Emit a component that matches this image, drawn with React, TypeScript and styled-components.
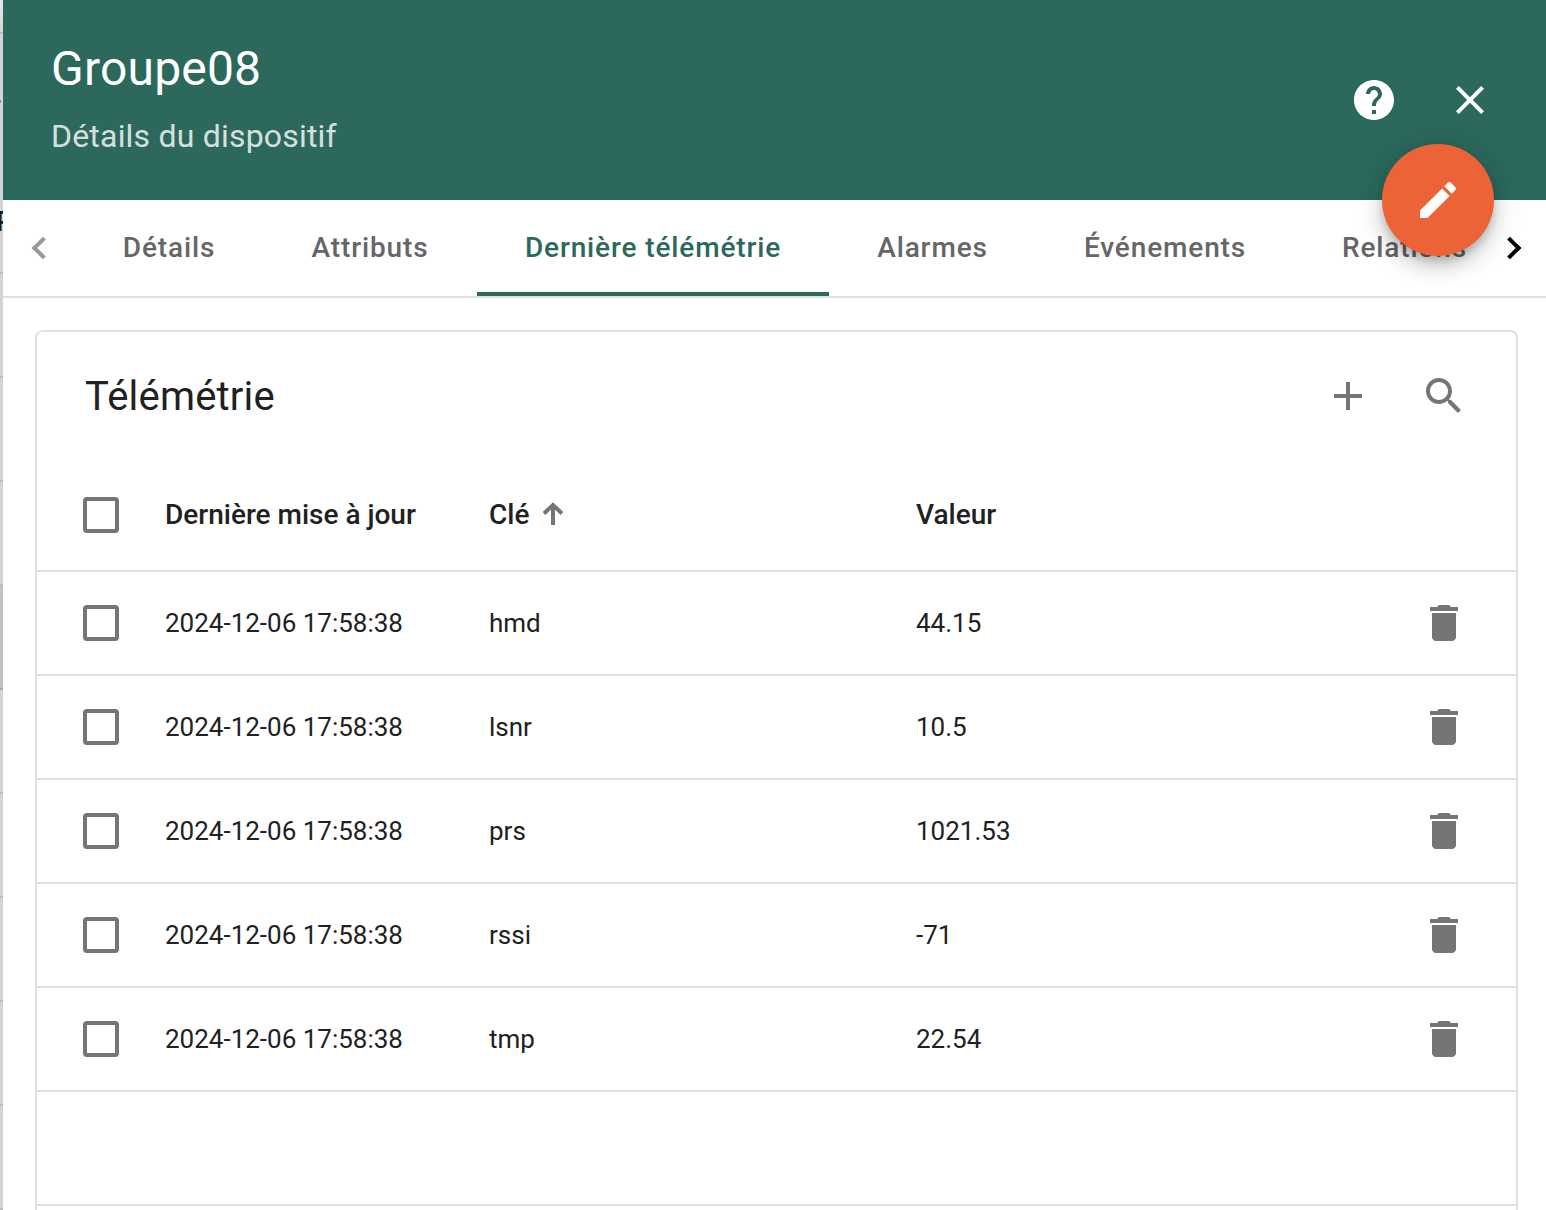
import React from "react";
import styled, { createGlobalStyle, css } from "styled-components";

const GREEN = "#2c685c";
const LINE = "#e0e0e0";
const ICON = "#757575";

const GlobalStyle = createGlobalStyle`
  * { box-sizing: border-box; }
  html, body { margin: 0; padding: 0; overflow: hidden; background: #fff; }
  body { font-family: Roboto, "Liberation Sans", sans-serif; -webkit-font-smoothing: antialiased; }
`;

const Page = styled.div`
  display: flex;
  width: 1546px;
  height: 1210px;
  overflow: hidden;
`;

const Backdrop = styled.div`
  flex: 0 0 3px;
  display: flex;
  flex-direction: column;
  overflow: hidden;
  background: #d4d4d4;
`;

const BackdropRow = styled.div<{ $height: number; $selected?: boolean; $top?: boolean }>`
  flex: 0 0 ${(p) => p.$height}px;
  overflow: hidden;
  border-bottom: 2px solid ${(p) => (p.$selected ? "#a9a9a9" : "#bcbcbc")};
  background: ${(p) =>
    p.$top ? "linear-gradient(#e6e6e6, #d6d8d6)" : p.$selected ? "#c2c2c2" : "#d4d4d4"};
`;

const BackdropTick = styled.span`
  display: block;
  width: 1px;
  height: 3px;
  margin-top: 66px;
  background: #8f8f8f;
`;

const BackdropText = styled.span`
  display: block;
  margin: 105px 0 0 -4px;
  font-size: 28px;
  line-height: 28px;
  font-weight: 500;
  color: #1b1b1b;
`;

const Drawer = styled.main`
  flex: 0 0 1547px;
  min-width: 0;
  display: flex;
  flex-direction: column;
  background: #fff;
`;

const Header = styled.header`
  flex: 0 0 200px;
  display: flex;
  align-items: center;
  justify-content: space-between;
  padding: 0 56px 0 48px;
  background: ${GREEN};
  color: #fff;
`;

const Titles = styled.div`
  display: flex;
  flex-direction: column;
  padding-bottom: 5px;
`;

const Title = styled.h1`
  margin: 0;
  font-size: 48px;
  line-height: 64px;
  font-weight: 400;
  letter-spacing: 0.2px;
`;

const Subtitle = styled.div`
  margin-top: 13px;
  font-size: 32px;
  line-height: 44px;
  letter-spacing: 0.2px;
  opacity: 0.8;
`;

const Actions = styled.div`
  display: flex;
  gap: 48px;
`;

const IconButton = styled.button`
  display: flex;
  width: 48px;
  height: 48px;
  padding: 0;
  border: 0;
  background: none;
  color: inherit;

  svg { width: 48px; height: 48px; fill: currentColor; }
`;

const Tabs = styled.nav`
  position: relative;
  flex: 0 0 98px;
  display: flex;
  border-bottom: 2px solid ${LINE};
`;

const Pager = styled.button<{ $next?: boolean }>`
  flex: 0 0 72px;
  display: flex;
  align-items: center;
  justify-content: center;
  border: 0;
  background: #fff;
  padding: ${(p) => (p.$next ? "0 8px 0 0" : "0 0 0 8px")};
`;

const Chevron = styled.i<{ $next?: boolean }>`
  width: 16px;
  height: 16px;
  border: solid ${(p) => (p.$next ? "#000" : "#999")};
  border-width: 4px 4px 0 0;
  transform: rotate(${(p) => (p.$next ? 45 : -135)}deg);
`;

const TabList = styled.div`
  flex: 1 1 0;
  min-width: 0;
  display: flex;
  overflow: hidden;
`;

const Tab = styled.button<{ $active?: boolean; $width: number }>`
  flex: 0 0 ${(p) => p.$width}px;
  display: flex;
  align-items: center;
  justify-content: center;
  padding: 0;
  border: 0;
  background: none;
  font: 500 28px/36px Roboto, "Liberation Sans", sans-serif;
  letter-spacing: 0.87px;
  white-space: nowrap;
  color: #666;
  ${(p) =>
    p.$active &&
    css`
      color: ${GREEN};
      box-shadow: inset 0 -4px ${GREEN};
    `}
`;

const Fab = styled.button`
  position: absolute;
  top: -56px;
  left: 1379px;
  width: 112px;
  height: 112px;
  display: flex;
  align-items: center;
  justify-content: center;
  border: 0;
  border-radius: 50%;
  background: #ec6337;
  box-shadow: 0 6px 10px -2px rgba(0, 0, 0, 0.2), 0 12px 20px rgba(0, 0, 0, 0.14),
    0 2px 36px rgba(0, 0, 0, 0.12);

  svg { width: 48px; height: 48px; fill: #fff; }
`;

const Body = styled.section`
  flex: 1 1 0;
  min-height: 0;
  display: flex;
  padding: 32px 32px 0;
`;

const Card = styled.div`
  flex: 1;
  display: flex;
  flex-direction: column;
  border: 2px solid ${LINE};
  border-bottom: 0;
  border-radius: 8px 8px 0 0;
`;

const CardBar = styled.div`
  flex: 0 0 128px;
  display: flex;
  align-items: center;
  justify-content: space-between;
  padding: 0 48px;
  color: ${ICON};
`;

const CardTitle = styled.h2`
  margin: 2px 0 0;
  font-size: 40px;
  line-height: 48px;
  font-weight: 400;
  letter-spacing: 0.2px;
  color: #212121;
`;

const Row = styled.div<{ $head?: boolean }>`
  flex: 0 0 ${(p) => (p.$head ? 112 : 104)}px;
  display: grid;
  grid-template-columns: 82px 324px 427px 1fr 48px;
  align-items: center;
  padding: 0 48px 0 46px;
  border-bottom: 2px solid ${LINE};
  font-size: ${(p) => (p.$head ? 28 : 26)}px;
  font-weight: ${(p) => (p.$head ? 500 : 400)};
  line-height: 40px;
  color: #212121;
`;

const Checkbox = styled.span`
  width: 36px;
  height: 36px;
  border: 4px solid ${ICON};
  border-radius: 4px;
`;

const Value = styled.span`
  grid-column: span 2;
`;

const SortLabel = styled.span`
  display: flex;
  align-items: center;
  gap: 13px;

  svg {
    width: 22px;
    height: 24px;
    margin-bottom: 2px;
    fill: none;
    stroke: ${ICON};
    stroke-width: 4;
  }
`;

const DeleteButton = styled(IconButton)`
  color: ${ICON};
`;

const Footer = styled.div`
  flex: 1;
  margin-top: 112px;
  border-top: 2px solid ${LINE};
`;

const paths = {
  help: "M12 2C6.48 2 2 6.48 2 12s4.48 10 10 10 10-4.48 10-10S17.52 2 12 2zm1 17h-2v-2h2v2zm2.07-7.75l-.9.92C13.45 12.9 13 13.5 13 15h-2v-.5c0-1.1.45-2.1 1.17-2.83l1.24-1.26c.37-.36.59-.86.59-1.41 0-1.1-.9-2-2-2s-2 .9-2 2H8c0-2.21 1.79-4 4-4s4 1.79 4 4c0 .88-.36 1.68-.93 2.25z",
  close: "M19 6.41L17.59 5 12 10.59 6.41 5 5 6.41 10.59 12 5 17.59 6.41 19 12 13.41 17.59 19 19 17.59 13.41 12z",
  edit: "M3 17.25V21h3.75L17.81 9.94l-3.75-3.75L3 17.25zM20.71 7.04c.39-.39.39-1.02 0-1.41l-2.34-2.34c-.39-.39-1.02-.39-1.41 0l-1.83 1.83 3.75 3.75 1.83-1.83z",
  add: "M19 13h-6v6h-2v-6H5v-2h6V5h2v6h6v2z",
  search:
    "M15.5 14h-.79l-.28-.27C15.41 12.59 16 11.11 16 9.5 16 5.91 13.09 3 9.5 3S3 5.91 3 9.5 5.91 16 9.5 16c1.61 0 3.09-.59 4.23-1.57l.27.28v.79l5 4.99L20.49 19l-4.99-5zm-6 0C7.01 14 5 11.99 5 9.5S7.01 5 9.5 5 14 7.01 14 9.5 11.99 14 9.5 14z",
  trash: "M6 19c0 1.1.9 2 2 2h8c1.1 0 2-.9 2-2V7H6v12zM19 4h-3.5l-1-1h-5l-1 1H5v2h14V4z",
};

const Icon = ({ name }: { name: keyof typeof paths }) => (
  <svg viewBox="0 0 24 24" aria-hidden="true">
    <path d={paths[name]} />
  </svg>
);

const tabs = [
  { label: "Détails", width: 188 },
  { label: "Attributs", width: 214 },
  { label: "Dernière télémétrie", width: 352, active: true },
  { label: "Alarmes", width: 207 },
  { label: "Événements", width: 258 },
  { label: "Relations", width: 221 },
];

const rows = [
  ["hmd", "44.15"],
  ["lsnr", "10.5"],
  ["prs", "1021.53"],
  ["rssi", "-71"],
  ["tmp", "22.54"],
];

export default function App() {
  return (
    <>
      <GlobalStyle />
      <Page>
        <Backdrop>
          <BackdropRow $height={34} $top />
          <BackdropRow $height={240}>
            <BackdropTick />
            <BackdropText>P</BackdropText>
          </BackdropRow>
          {[0, 1, 2, 3, 4, 5, 6, 7, 8].map((i) => (
            <BackdropRow key={i} $height={104} $selected={i === 3} />
          ))}
        </Backdrop>
        <Drawer>
          <Header>
            <Titles>
              <Title>Groupe08</Title>
              <Subtitle>Détails du dispositif</Subtitle>
            </Titles>
            <Actions>
              <IconButton aria-label="Aide"><Icon name="help" /></IconButton>
              <IconButton aria-label="Fermer"><Icon name="close" /></IconButton>
            </Actions>
          </Header>
          <Tabs>
            <Pager aria-label="Précédent"><Chevron /></Pager>
            <TabList>
              {tabs.map((t) => (
                <Tab key={t.label} $active={t.active} $width={t.width}>{t.label}</Tab>
              ))}
            </TabList>
            <Pager $next aria-label="Suivant"><Chevron $next /></Pager>
            <Fab aria-label="Modifier"><Icon name="edit" /></Fab>
          </Tabs>
          <Body>
            <Card>
              <CardBar>
                <CardTitle>Télémétrie</CardTitle>
                <Actions>
                  <IconButton aria-label="Ajouter"><Icon name="add" /></IconButton>
                  <IconButton aria-label="Rechercher"><Icon name="search" /></IconButton>
                </Actions>
              </CardBar>
              <Row $head>
                <Checkbox />
                <span>Dernière mise à jour</span>
                <SortLabel>
                  Clé
                  <svg viewBox="0 0 22 24"><path d="M11 23V3M2 11.5L11 3l9 8.5" /></svg>
                </SortLabel>
                <Value>Valeur</Value>
              </Row>
              {rows.map(([key, value]) => (
                <Row key={key}>
                  <Checkbox />
                  <span>2024-12-06 17:58:38</span>
                  <span>{key}</span>
                  <span>{value}</span>
                  <DeleteButton aria-label="Supprimer"><Icon name="trash" /></DeleteButton>
                </Row>
              ))}
              <Footer />
            </Card>
          </Body>
        </Drawer>
      </Page>
    </>
  );
}
